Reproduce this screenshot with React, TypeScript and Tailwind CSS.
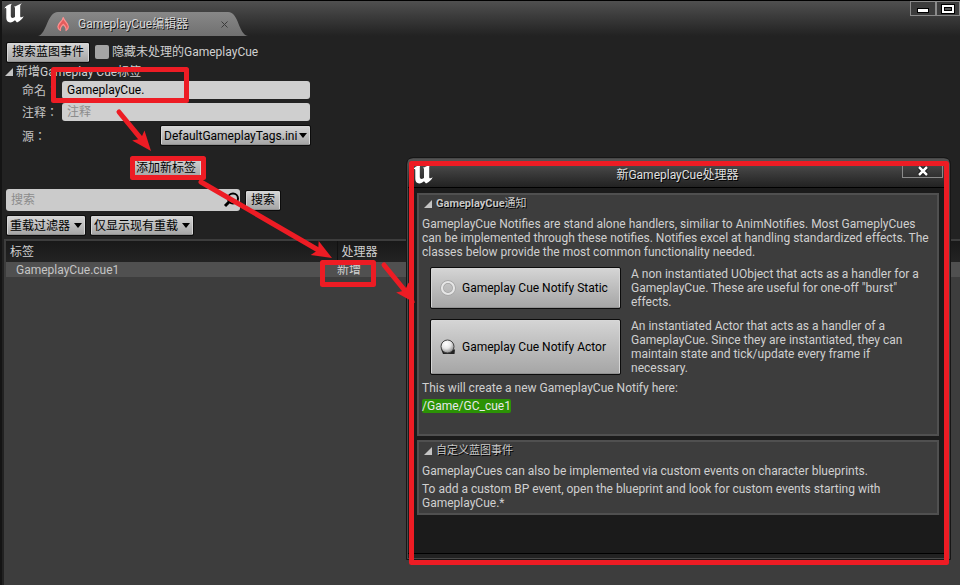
import type { ReactNode } from "react";

const RAISED =
  "border border-[#d6d6d6] border-b-[#909090] bg-linear-to-b from-[#d4d4d4] to-[#a6a6a6] text-black outline outline-[#0c0c0c]";

function UnrealLogo() {
  return (
    <svg width="20" height="20" viewBox="0 0 20 20" fill="#fff" aria-hidden="true">
      <path d="M0 6.5C1 3.400 3.600 1.300 8 .8c-.8.7-1.200 1.400-1.200 2.400v9.800c0 1.200.8 1.900 1.900 1.900 1 0 1.700-.5 2.300-1.200V5.200c0-.9-.4-1.400-1.200-1.500C12 3 14.800 1.800 18 .2c-1.200 1.200-1.800 2-1.800 3.200v9.400c0 1 .3 1.500 1 1.500.6 0 1.400-.3 2.500-1-1.300 2.700-3.400 4.600-6.700 6.100l-2-2.200c-1.300 1.200-2.900 2.200-4.800 2.200C3.800 19.400 2.300 17.800 2.300 15V6.300c0-.9-.3-1.200-.8-1.200-.4 0-.9.400-1.500 1.400z" />
    </svg>
  );
}

function FlameIcon() {
  return (
    <svg width="14" height="16" viewBox="0 0 14 16" fill="none" aria-hidden="true">
      <path
        d="M7.200 1.500C8 5 12.300 6.800 12.300 10.700c0 1.800-.9 3.100-2.300 3.800.7-2.300-.5-4-2.800-6.200-2 2-3.500 3.900-2.800 6.200C2.800 13.700 1.900 12.500 1.900 10.700c0-3.600 4.800-5.100 5.300-9.200z"
        fill="#e45c5c"
        stroke="#ff9090"
        strokeWidth="1.200"
        strokeLinejoin="round"
      />
    </svg>
  );
}

function Triangle() {
  return (
    <svg width="8" height="8" viewBox="0 0 8 8" fill="#c4c4c4" aria-hidden="true">
      <path d="M8 0v8H0z" />
    </svg>
  );
}

function Dropdown({ id, label, value, width }: { id: string; label?: string; value: string; width: string }) {
  return (
    <div className={`relative ${width}`}>
      <select
        id={id}
        aria-label={label}
        className={`block h-[19px] w-full appearance-none rounded-[1px] pr-2 pl-[2px] text-[12px] leading-4 ${RAISED}`}
      >
        <option>{value}</option>
      </select>
      <svg className="pointer-events-none absolute top-[7px] right-[3px]" width="8" height="5" viewBox="0 0 8 5" aria-hidden="true">
        <path d="M0 0h8L4 5z" />
      </svg>
    </div>
  );
}

function PushButton({ children }: { children: ReactNode }) {
  return (
    <button type="button" className={`h-[19px] rounded-[1px] px-1 text-[12px] leading-4 ${RAISED}`}>
      {children}
    </button>
  );
}

const LABEL = "w-10 whitespace-nowrap font-['Noto_Sans_CJK_TC',sans-serif]";

function Field({ id, label, children }: { id: string; label: string; children: ReactNode }) {
  return (
    <div className="flex items-center">
      <label htmlFor={id} className={LABEL}>
        {label}
      </label>
      {children}
    </div>
  );
}

const INPUT = "h-[18px] w-[248px] rounded-[3px] bg-[#cfcfcf] px-[5px] text-[12px] text-black placeholder:text-[#8c8c8c]";

function Section({ title, height, children }: { title: ReactNode; height: string; children: ReactNode }) {
  return (
    <section className={`border-2 border-[#505050] bg-[#3d3d3d] px-[3px] ${height}`}>
      <h2 className="flex h-[18px] items-center gap-1 pl-[2px] text-[11px] font-normal text-[#c8c8c8] [text-shadow:1px_1px_0_#000]">
        <Triangle />
        <span>{title}</span>
      </h2>
      {children}
    </section>
  );
}

function NotifyChoice({ icon, name, height, children }: { icon: ReactNode; name: string; height: string; children: ReactNode }) {
  return (
    <div className="flex items-center gap-[11px] pr-2 pl-[9px]">
      <button type="button" className={`flex w-[189px] shrink-0 items-center gap-[6px] rounded-[1px] pl-2 text-[12px] ${height} ${RAISED}`}>
        {icon}
        {name}
      </button>
      <p>{children}</p>
    </div>
  );
}

function RingIcon() {
  return (
    <svg width="16" height="16" viewBox="0 0 16 16" fill="none" aria-hidden="true">
      <circle cx="8" cy="8" r="6" stroke="#a0a0a0" strokeWidth="3.500" />
      <circle cx="8" cy="8" r="6" stroke="#e6e6e6" strokeWidth="2.200" />
    </svg>
  );
}

function SphereIcon() {
  return (
    <svg width="16" height="16" viewBox="0 0 16 16" aria-hidden="true">
      <defs>
        <radialGradient id="ball" cx="0.4" cy="0.3" r="0.700">
          <stop offset="0" stopColor="#fff" />
          <stop offset="0.500" stopColor="#e8e8e8" />
          <stop offset="1" stopColor="#8c8c8c" />
        </radialGradient>
      </defs>
      <path d="M1 10l2 5h11.500l.5-4.500z" fill="#222" />
      <circle cx="7.500" cy="7.500" r="6.500" fill="url(#ball)" stroke="#444" strokeWidth="1" />
    </svg>
  );
}

function HandlerDialog() {
  return (
    <div
      role="dialog"
      aria-label="新GameplayCue处理器"
      className="absolute top-[158px] left-[407px] flex h-[401px] w-[543px] flex-col rounded-t-md border border-[#484848] bg-[#1b1b1b] outline outline-[#161616]"
    >
      <header className="flex h-[29px] shrink-0 items-start border-b border-black bg-linear-to-b from-[#555] to-[#222] pt-[5px] pl-[5px]">
        <UnrealLogo />
        <h1 className="flex-1 pl-5 text-center text-[12px] leading-[22px] text-[#e0e0e0] [text-shadow:1px_1px_0_#000]">新GameplayCue处理器</h1>
        <button
          type="button"
          aria-label="关闭"
          className="mr-[6px] flex h-[14px] w-[41px] items-center justify-center border border-t-0 border-[#8a8a8a] bg-linear-to-b from-[#484848] to-[#303030]"
        >
          <svg width="12" height="10" viewBox="0 0 12 10" aria-hidden="true">
            <path d="M2 1l8 8M10 1L2 9" stroke="#000" strokeWidth="4" />
            <path d="M2 1l8 8M10 1L2 9" stroke="#fff" strokeWidth="2.500" />
          </svg>
        </button>
      </header>
      <div className="flex flex-1 flex-col gap-1 border-b border-black pt-[5px] pr-[10px] pl-[9px] text-[12px] leading-[14px] text-[#d0d0d0]">
        <Section
          title={
            <>
              <b>GameplayCue</b>通知
            </>
          }
          height="h-[243px]"
        >
          <p className="mt-1">
            GameplayCue Notifies are stand alone handlers, similiar to AnimNotifies. Most GameplyCues can be implemented through these notifies. Notifies excel at handling standardized effects. The classes below provide the most common functionality needed.
          </p>
          <div className="mt-2 flex flex-col gap-[10px]">
            <NotifyChoice icon={<RingIcon />} name="Gameplay Cue Notify Static" height="h-10">
              A non instantiated UObject that acts as a handler for a GameplayCue. These are useful for one-off "burst" effects.
            </NotifyChoice>
            <NotifyChoice icon={<SphereIcon />} name="Gameplay Cue Notify Actor" height="h-[54px]">
              An instantiated Actor that acts as a handler of a GameplayCue. Since they are instantiated, they can maintain state and tick/update every frame if necessary.
            </NotifyChoice>
          </div>
          <p className="mt-[6px]">This will create a new GameplayCue Notify here:</p>
          <p className="mt-1">
            <span className="inline-block rounded-[2px] bg-[#2b9205] text-[#e8e8e8]">/Game/GC_cue1</span>
          </p>
        </Section>
        <Section title="自定义蓝图事件" height="h-[75px]">
          <p className="mt-1">GameplayCues can also be implemented via custom events on character blueprints.</p>
          <p className="mt-1">To add a custom BP event, open the blueprint and look for custom events starting with GameplayCue.*</p>
        </Section>
      </div>
      <div className="h-1 shrink-0 bg-[#222]" />
    </div>
  );
}

function Annotations() {
  const arrows = [
    { x: 119, y: 112, tx: 151, ty: 151 },
    { x: 201, y: 182, tx: 332, ty: 258 },
    { x: 384, y: 265, tx: 415, ty: 303 },
  ];
  return (
    <svg className="pointer-events-none absolute top-0 left-0" width="960" height="585" fill="none" stroke="#ed1c24" aria-hidden="true">
      <g strokeWidth="5" strokeLinejoin="round">
        <rect x="53.500" y="69.500" width="133" height="31" />
        <rect x="132.500" y="158.500" width="71" height="19" />
        <rect x="322.500" y="262.500" width="51" height="22" />
        <rect x="411.500" y="163.500" width="535" height="399" />
      </g>
      {arrows.map(({ x, y, tx, ty }) => {
        const angle = (Math.atan2(ty - y, tx - x) * 180) / Math.PI;
        const length = Math.hypot(tx - x, ty - y);
        return (
          <g key={x} transform={`translate(${x} ${y}) rotate(${angle})`}>
            <path d={`M0 0H${length - 14}`} strokeWidth="5" strokeLinecap="round" />
            <path d={`M${length} 0l-20 -8l4 8l-4 8z`} fill="#ed1c24" stroke="none" />
          </g>
        );
      })}
    </svg>
  );
}

export default function App() {
  return (
    <div className="relative flex min-h-screen flex-col overflow-hidden bg-[#222] pl-[2px] font-[Roboto,'Noto_Sans_CJK_SC',sans-serif] text-[12px] leading-[14px] text-[#c4c4c4] shadow-[inset_2px_0_0_#141414]">
      <header className="flex h-9 justify-between border-t border-black bg-linear-to-b from-[#505050] to-[#222]">
        <div className="flex">
          <div className="pt-[2px] pl-[2px]">
            <UnrealLogo />
          </div>
          <div className="relative ml-[14px] flex h-6 w-[210px] items-center self-end pl-[18px] text-[#d8d8d8]">
            <svg className="absolute inset-0" width="210" height="24" viewBox="0 0 210 24" aria-hidden="true">
              <defs>
                <linearGradient id="tab" x1="0" y1="0" x2="0" y2="1">
                  <stop offset="0" stopColor="#888" />
                  <stop offset="1" stopColor="#707070" />
                </linearGradient>
              </defs>
              <path d="M0 24C9 22 9 0 20 0H190C201 0 200 22 210 24z" fill="url(#tab)" />
            </svg>
            <div className="relative flex w-full items-center">
              <FlameIcon />
              <span className="flex-1 pl-2 [text-shadow:1px_1px_0_#111]">GameplayCue编辑器</span>
              <button type="button" aria-label="关闭标签页" className="mr-5">
                <svg width="7" height="7" viewBox="0 0 7 7" stroke="#3a3a3a" aria-hidden="true">
                  <path d="M.5.5l6 6M6.500.5l-6 6" />
                </svg>
              </button>
            </div>
          </div>
        </div>
        <div className="flex h-[15px]">
          <button type="button" aria-label="最小化" className="flex w-[26px] items-end justify-center border border-[#8a8a8a] bg-[#3c3c3c] pb-[2px]">
            <span className="h-[5px] w-3 border border-black bg-white" />
          </button>
          <button type="button" aria-label="最大化" className="flex w-6 items-center justify-center border border-[#8a8a8a] bg-[#3c3c3c]">
            <span className="flex h-[10px] w-[14px] items-center justify-center border border-black bg-white">
              <span className="h-1 w-2 border border-black bg-[#555]" />
            </span>
          </button>
        </div>
      </header>

      <main className="flex flex-1 flex-col">
        <div className="mt-[6px] flex h-5 items-center gap-[6px] pl-[5px]">
          <PushButton>搜索蓝图事件</PushButton>
          <label className="flex items-center gap-[3px] text-[#d0d0d0]">
            <input type="checkbox" className="size-[14px] appearance-none rounded-[2px] bg-[#a4a4a4]" />
            隐藏未处理的GameplayCue
          </label>
        </div>
        <div className="mt-[3px] flex items-center gap-[3px] pl-[3px] text-[#d0d0d0]">
          <Triangle />
          新增Gameplay Cue标签
        </div>
        <div className="flex w-[308px] flex-col gap-1 pt-[2px] pl-5">
          <Field id="tag-name" label="命名：">
            <input id="tag-name" defaultValue="GameplayCue." className={INPUT} />
          </Field>
          <Field id="tag-comment" label="注释：">
            <input id="tag-comment" placeholder="注释" className={INPUT} />
          </Field>
          <div className="mt-px flex items-center justify-between">
            <label htmlFor="tag-source" className={LABEL}>
              源：
            </label>
            <Dropdown id="tag-source" value="DefaultGameplayTags.ini" width="w-[149px]" />
          </div>
        </div>
        <div className="mt-[13px] flex w-[328px] justify-center">
          <PushButton>添加新标签</PushButton>
        </div>
        <div className="mt-3 flex items-center gap-[6px] pl-1">
          <div className="relative">
            <input aria-label="搜索" placeholder="搜索" className="block h-[22px] w-[234px] rounded-[3px] bg-[#cbcbcb] px-[5px] text-[12px] placeholder:text-[#8c8c8c]" />
            <svg className="absolute top-[3px] right-0" width="17" height="16" viewBox="0 0 17 16" fill="none" stroke="#000" aria-hidden="true">
              <circle cx="10" cy="6.500" r="5" strokeWidth="2" />
              <path d="M6 10l-4 4" strokeWidth="3" />
            </svg>
          </div>
          <PushButton>搜索</PushButton>
        </div>
        <div className="mt-[5px] flex gap-[6px] pl-[5px]">
          <Dropdown id="override-filter" label="重载过滤器" value="重载过滤器" width="w-[78px]" />
          <Dropdown id="override-display" label="显示" value="仅显示现有重载" width="w-[102px]" />
        </div>
        <div className="mt-1 ml-[2px] flex-1 border-2 border-r-0 border-[#3d3d3d] bg-[#3d3d3d]">
          <table className="w-full table-fixed text-left">
            <thead>
              <tr className="h-[21px] bg-linear-to-b from-[#191919] to-[#232323] text-[#d0d0d0]">
                <th className="w-[331px] border-r border-[#111] pl-1 font-normal">标签</th>
                <th className="pl-1 font-normal">处理器</th>
              </tr>
            </thead>
            <tbody>
              <tr className="h-[15px] bg-[#505050]">
                <td className="pl-[10px]">GameplayCue.cue1</td>
                <td>
                  <button type="button" className="block leading-[14px] text-[#d0d0d0]">新增</button>
                </td>
              </tr>
            </tbody>
          </table>
        </div>
      </main>

      <HandlerDialog />
      <Annotations />
    </div>
  );
}
